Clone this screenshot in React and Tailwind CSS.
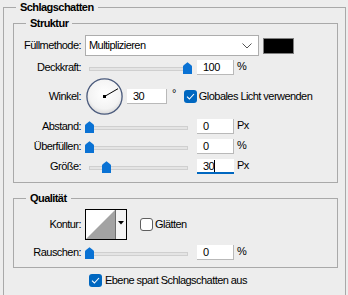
import React from 'react';

const Thumb = () => (
  <svg width="9" height="12" viewBox="0 0 9 12">
    <path d="M0 4.5 Q0 3.6 1 2.9 L4.5 0.3 L8 2.9 Q9 3.6 9 4.5 V12 H0 Z" fill="#0a72d4" />
  </svg>
);

function Slider({ pos }) {
  return (
    <div className="relative w-[107px] h-[12px]">
      <div className="absolute left-[4px] right-[4px] top-[5px] h-[4px] bg-[#e4e4e4] border border-[#cfcfcf]" />
      <div className="absolute top-0" style={{ left: pos }}>
        <Thumb />
      </div>
    </div>
  );
}

function NumBox({ value, unit, active }) {
  return (
    <div className="flex items-start">
      <div
        className={
          active
            ? 'w-[37px] h-[15px] bg-white pl-[6px] leading-[14px] border-b-2 border-[#0067c0]'
            : 'w-[37px] h-[15px] bg-white pl-[6px] leading-[15px] border-b border-r border-[#b9b9b9]'
        }
      >
        {value}
        {active && <span className="inline-block w-px h-[12px] bg-black align-[-2px]" />}
      </div>
      <span className="ml-[3px] leading-[12px]">{unit}</span>
    </div>
  );
}

const Label = ({ children }) => (
  <div className="w-[67px] shrink-0 text-right">{children}</div>
);

function Check({ checked }) {
  if (!checked) {
    return <div className="w-[13px] h-[13px] rounded-[3px] bg-white border border-[#5f5f5f]" />;
  }
  return (
    <div className="w-[13px] h-[13px] rounded-[3px] bg-[#0067c0] flex items-center justify-center">
      <svg width="9" height="7" viewBox="0 0 9 7">
        <path d="M1 3.6 L3.4 6 L8 1" fill="none" stroke="#fff" strokeWidth="1.1" />
      </svg>
    </div>
  );
}

function SliderRow({ label, pos, value, unit, active, mt }) {
  return (
    <div className={`flex items-center h-[15px] ${mt}`}>
      <Label>{label}</Label>
      <div className="ml-[4px]">
        <Slider pos={pos} />
      </div>
      <div className="ml-[5px]">
        <NumBox value={value} unit={unit} active={active} />
      </div>
    </div>
  );
}

export default function App() {
  return (
    <div className="w-[348px] h-[295px] overflow-hidden bg-[#ededed] text-black text-[11px] tracking-[-0.55px] font-['Liberation_Sans',Arial,sans-serif]">
      <fieldset className="ml-[3px] w-[343px] h-[310px] border border-[#a9a9a9]">
        <legend className="ml-[12px] px-[4px] leading-[14px] font-bold">Schlagschatten</legend>

        {/* Struktur */}
        <fieldset className="ml-[9px] mt-[2px] w-[325px] border border-[#a9a9a9] pb-[8px]">
          <legend className="ml-[12px] px-[4px] leading-[14px] font-bold">Struktur</legend>

          <div className="flex items-center h-[21px] mt-[5px]">
            <Label>Füllmethode:</Label>
            <div className="ml-[4px] w-[174px] h-[21px] bg-white border border-[#adadad] flex items-center justify-between pl-[3px] pr-[6px]">
              <span>Multiplizieren</span>
              <svg width="10" height="6" viewBox="0 0 10 6">
                <path d="M0.5 0.5 L5 5 L9.5 0.5" fill="none" stroke="#555" strokeWidth="1" />
              </svg>
            </div>
            <div className="ml-[4px] w-[31px] h-[16px] bg-black border border-[#7f7f7f]" />
          </div>

          <SliderRow label="Deckkraft:" pos={98} value="100" unit="%" mt="mt-[4px]" />

          <div className="flex items-center h-[37px] mt-[3px]">
            <Label>Winkel:</Label>
            <div className="ml-[5px]">
              <svg width="37" height="37" viewBox="0 0 37 37">
                <defs>
                  <radialGradient id="dial" cx="50%" cy="42%" r="58%">
                    <stop offset="0%" stopColor="#ffffff" />
                    <stop offset="75%" stopColor="#f3f3f3" />
                    <stop offset="100%" stopColor="#d9d9d9" />
                  </radialGradient>
                </defs>
                <circle cx="18.5" cy="18.5" r="17.6" fill="url(#dial)" stroke="#4a5a7c" strokeWidth="1.3" />
                <line x1="18.5" y1="18.5" x2="32" y2="10.7" stroke="#000" strokeWidth="1" />
                <rect x="17" y="17" width="3" height="3" fill="#000" />
              </svg>
            </div>
            <div className="ml-[4px] w-[40px] h-[15px] bg-white pl-[6px] leading-[15px] border-b border-r border-[#b9b9b9]">30</div>
            <span className="ml-[5px] self-start mt-[10px] leading-[10px]">°</span>
            <div className="ml-[8px]">
              <Check checked />
            </div>
            <span className="ml-[2px]">Globales Licht verwenden</span>
          </div>

          <SliderRow label="Abstand:" pos={0} value="0" unit="Px" mt="mt-[4px]" />
          <SliderRow label="Überfüllen:" pos={0} value="0" unit="%" mt="mt-[5px]" />
          <SliderRow label="Größe:" pos={17} value="30" unit="Px" active mt="mt-[5px]" />
        </fieldset>

        {/* Qualität */}
        <fieldset className="ml-[9px] mt-[8px] w-[325px] border border-[#a9a9a9] pb-[7px]">
          <legend className="ml-[12px] px-[4px] leading-[14px] font-bold">Qualität</legend>

          <div className="flex items-center h-[31px] mt-[4px]">
            <Label>Kontur:</Label>
            <div className="ml-[4px] w-[42px] h-[31px] border border-black flex">
              <svg width="29" height="29" viewBox="0 0 29 29" className="bg-white">
                <path d="M0 29 L29 0 L29 29 Z" fill="#a3a3a3" />
              </svg>
              <div className="flex-1 border-l border-[#6f6f6f] bg-[#f4f4f4] flex items-start justify-center pt-[11px]">
                <svg width="6" height="4" viewBox="0 0 6 4">
                  <path d="M0 0 H6 L3 3.5 Z" fill="#000" />
                </svg>
              </div>
            </div>
            <div className="ml-[13px]">
              <Check />
            </div>
            <span className="ml-[2px]">Glätten</span>
          </div>

          <SliderRow label="Rauschen:" pos={0} value="0" unit="%" mt="mt-[5px]" />
        </fieldset>

        <div className="flex items-center ml-[85px] mt-[6px] h-[13px]">
          <Check checked />
          <span className="ml-[3px]">Ebene spart Schlagschatten aus</span>
        </div>
      </fieldset>
    </div>
  );
}
